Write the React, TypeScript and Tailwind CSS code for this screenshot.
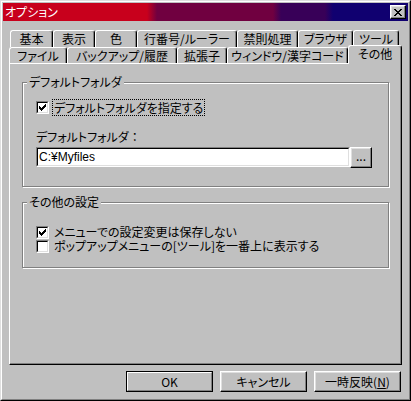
import React from 'react';

const CHECK = ['......X', '.....XX', 'X...XXX', 'XX.XXX.', 'XXXXX..', '.XXX...', '..X....'];
const CLOSE = ['XX....XX', '.XX..XX.', '..XXXX..', '...XX...', '..XXXX..', '.XX..XX.', 'XX....XX'];

function Pixels({ rows }: { rows: string[] }) {
  return (
    <svg width={rows[0].length} height={rows.length} shapeRendering="crispEdges" className="block">
      {rows.flatMap((r, y) =>
        r.split('').map((c, x) =>
          c === 'X' ? <rect key={`${x}-${y}`} x={x} y={y} width={1} height={1} fill="#000" /> : null
        )
      )}
    </svg>
  );
}

function Checkbox({ checked }: { checked?: boolean }) {
  return (
    <div className="w-[13px] h-[13px] shrink-0 border border-t-[#808080] border-l-[#808080] border-r-white border-b-white">
      <div className="w-full h-full border border-t-black border-l-black border-r-[#dfdfdf] border-b-[#dfdfdf] bg-white flex items-center justify-center">
        {checked && <Pixels rows={CHECK} />}
      </div>
    </div>
  );
}

function Button({ children, isDefault }: { children: React.ReactNode; isDefault?: boolean }) {
  if (isDefault) {
    return (
      <div className="w-[87px] h-[21px] border border-black">
        <div className="w-full h-full flex items-center justify-center border border-t-white border-l-white border-r-[#808080] border-b-[#808080]">{children}</div>
      </div>
    );
  }
  return (
    <div className="w-[87px] h-[21px] flex items-center justify-center border border-t-white border-l-white border-r-black border-b-black shadow-[inset_-1px_-1px_#808080,inset_1px_1px_#dfdfdf]">
      {children}
    </div>
  );
}

const row1 = [
  { label: '基本', w: 'w-[43px]' },
  { label: '表示', w: 'w-[42px]' },
  { label: '色', w: 'w-[42px]' },
  { label: '行番号/ルーラー', w: 'w-[100px]' },
  { label: '禁則処理', w: 'w-[61px]' },
  { label: 'ブラウザ', w: 'w-[55px]' },
  { label: 'ツール', w: 'w-[46px]' },
];

const row2 = [
  { label: 'ファイル', w: 'w-[58px]' },
  { label: 'バックアップ/履歴', w: 'w-[110px]' },
  { label: '拡張子', w: 'w-[50px]' },
  { label: 'ウィンドウ/漢字コード', w: 'w-[121px]' },
];

const tabCls = 'flex items-center justify-center border-t border-l border-r border-t-white border-l-white border-r-black rounded-t-[3px] shadow-[inset_-1px_0_#808080] whitespace-nowrap leading-none';

function GroupBox({ legend, className, children }: { legend: string; className: string; children: React.ReactNode }) {
  return (
    <div className={`relative border border-[#808080] shadow-[inset_1px_1px_white,1px_1px_white] ${className}`}>
      <span className="absolute left-[4px] -top-[8px] bg-[#c0c0c0] px-[2px] leading-[14px]">{legend}</span>
      {children}
    </div>
  );
}

export default function App() {
  return (
    <div className="w-[411px] h-[401px] bg-[#c0c0c0] text-black text-[12px] font-['Noto_Sans_CJK_JP',sans-serif] [font-feature-settings:'palt'] border border-t-[#dfdfdf] border-l-[#dfdfdf] border-r-black border-b-black">
      <div className="h-full border border-t-white border-l-white border-r-[#808080] border-b-[#808080] p-px flex flex-col">
        {/* title bar */}
        <div className="h-[18px] shrink-0 flex items-center justify-between bg-[linear-gradient(to_right,#c8001c_144px,#700040_154px,#700040_270px,#380058_278px,#380058_322px,#100070_330px)]">
          <span className="pl-[2px] text-white text-[12px] leading-none">オプション</span>
          <div className="mr-[2px] w-[16px] h-[14px] bg-[#c0c0c0] flex items-center justify-center border border-t-white border-l-white border-r-black border-b-black shadow-[inset_-1px_-1px_#808080,inset_1px_1px_#dfdfdf]">
            <Pixels rows={CLOSE} />
          </div>
        </div>

        {/* tabs */}
        <div className="mt-[9px] ml-[7px] flex h-[17px]">
          {row1.map((t) => (
            <div key={t.label} className={`${tabCls} ${t.w} h-full`}>{t.label}</div>
          ))}
        </div>
        <div className="ml-[6px] flex items-end h-[16px]">
          {row2.map((t) => (
            <div key={t.label} className={`${tabCls} ${t.w} h-full bg-[#c0c0c0]`}>{t.label}</div>
          ))}
          <div className={`${tabCls} w-[54px] h-[19px] -mb-px relative z-10 bg-[#c0c0c0] pb-[2px]`}>その他</div>
        </div>

        {/* panel */}
        <div className="ml-[6px] w-[393px] h-[302px] shrink-0 border border-t-white border-l-white border-r-black border-b-black shadow-[inset_-1px_-1px_#808080] flex flex-col">
          <GroupBox legend="デフォルトフォルダ" className="ml-[12px] mt-[18px] w-[367px] h-[105px] flex flex-col pl-[13px]">
            <div className="mt-[16px] h-[17px] flex items-center">
              <Checkbox checked />
              <div className="ml-[3px] h-[17px] border border-dotted border-black px-[1px] flex items-center leading-none">デフォルトフォルダを指定する</div>
            </div>
            <div className="mt-[14px] h-[14px] leading-[14px]">
              デフォルトフォルダ<span className="[font-feature-settings:normal]">：</span>
            </div>
            <div className="mt-[3px] flex items-start">
              <div className="w-[314px] h-[20px] border border-t-[#808080] border-l-[#808080] border-r-white border-b-white">
                <div className="w-full h-full border border-t-black border-l-black border-r-[#dfdfdf] border-b-[#dfdfdf] bg-white flex items-center pl-px leading-none font-['Liberation_Sans','Noto_Sans_CJK_JP',sans-serif]">C:¥Myfiles</div>
              </div>
              <div className="w-[22px] h-[21px] flex items-center justify-center border border-t-white border-l-white border-r-black border-b-black shadow-[inset_-1px_-1px_#808080,inset_1px_1px_#dfdfdf] leading-none pb-[3px]">...</div>
            </div>
          </GroupBox>

          <GroupBox legend="その他の設定" className="ml-[12px] mt-[15px] w-[367px] h-[66px] flex flex-col pl-[13px]">
            <div className="mt-[22px] h-[14px] flex items-center">
              <Checkbox checked />
              <span className="ml-[5px] leading-[14px]">メニューでの設定変更は保存しない</span>
            </div>
            <div className="h-[14px] flex items-center">
              <Checkbox />
              <span className="ml-[5px] leading-[14px]">ポップアップメニューの[ツール]を一番上に表示する</span>
            </div>
          </GroupBox>
        </div>

        {/* buttons */}
        <div className="mt-[6px] ml-[123px] flex gap-[7px] leading-none">
          <Button isDefault>OK</Button>
          <Button>キャンセル</Button>
          <Button>
            一時反映(<span className="underline">N</span>)
          </Button>
        </div>
      </div>
    </div>
  );
}
